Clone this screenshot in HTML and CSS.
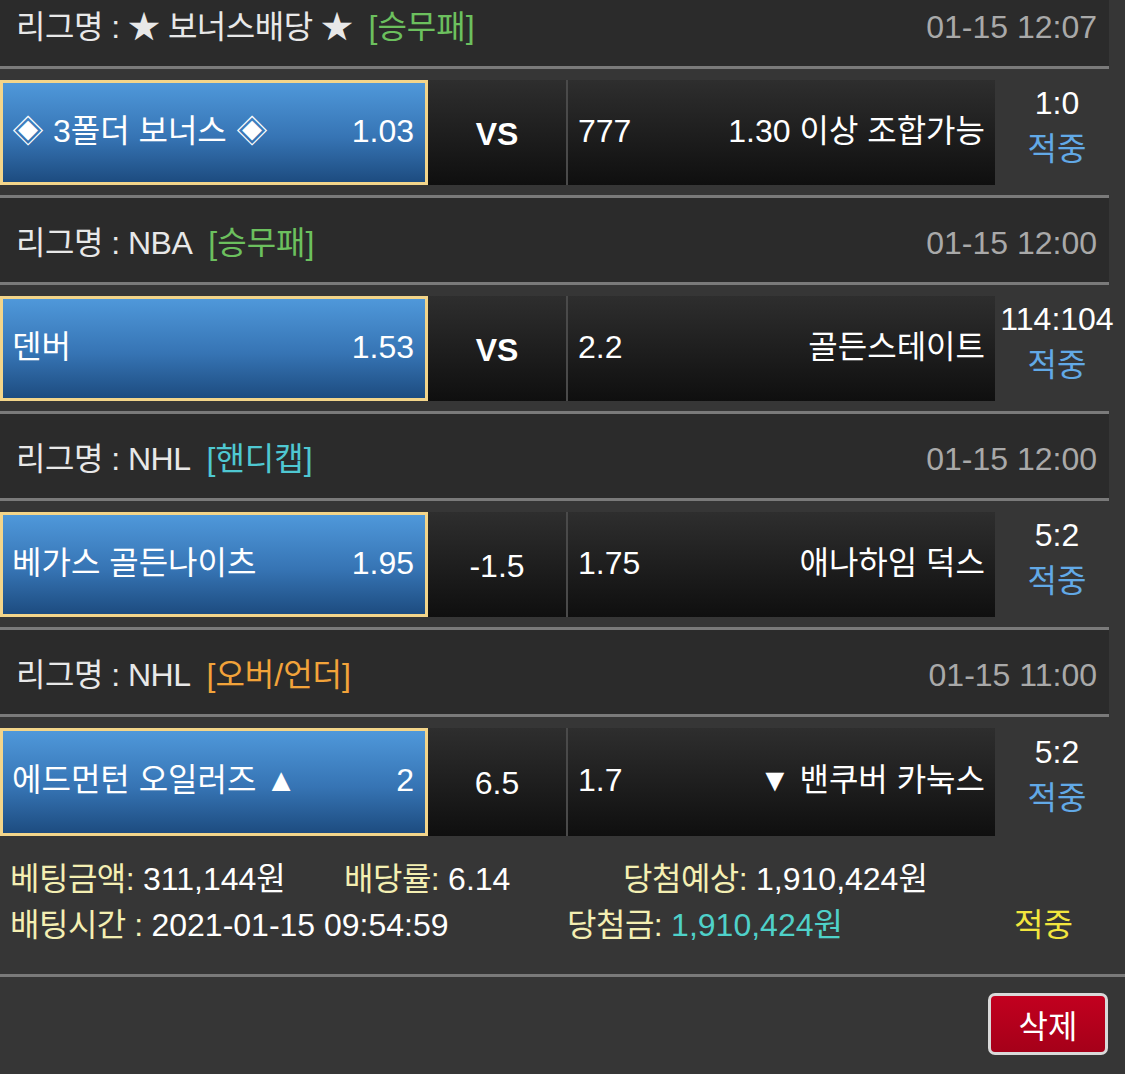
FILE: index.html
```html
<!DOCTYPE html>
<html lang="ko">
<head>
    <meta charset="UTF-8">
    <meta name="viewport" content="width=device-width, initial-scale=1.0">
    <title>베팅내역</title>
    <link rel="stylesheet" href="styles.css">
</head>
<body>
    <div class="slip">
        <div class="game">
            <div class="league">
                <span class="name">리그명 : ★ 보너스배당 ★</span>
                <span class="type win">[승무패]</span>
                <span class="time">01-15 12:07</span>
            </div>
            <div class="match">
                <div class="home"><span>◈ 3폴더 보너스 ◈</span><span>1.03</span></div>
                <div class="mid vs">VS</div>
                <div class="away"><span>777</span><span>1.30 이상 조합가능</span></div>
                <div class="result"><div>1:0</div><div class="hit">적중</div></div>
            </div>
        </div>
        <div class="game">
            <div class="league">
                <span class="name">리그명 : NBA</span>
                <span class="type win">[승무패]</span>
                <span class="time">01-15 12:00</span>
            </div>
            <div class="match">
                <div class="home"><span>덴버</span><span>1.53</span></div>
                <div class="mid vs">VS</div>
                <div class="away"><span>2.2</span><span>골든스테이트</span></div>
                <div class="result"><div>114:104</div><div class="hit">적중</div></div>
            </div>
        </div>
        <div class="game">
            <div class="league">
                <span class="name">리그명 : NHL</span>
                <span class="type handi">[핸디캡]</span>
                <span class="time">01-15 12:00</span>
            </div>
            <div class="match">
                <div class="home"><span>베가스 골든나이츠</span><span>1.95</span></div>
                <div class="mid">-1.5</div>
                <div class="away"><span>1.75</span><span>애나하임 덕스</span></div>
                <div class="result"><div>5:2</div><div class="hit">적중</div></div>
            </div>
        </div>
        <div class="game">
            <div class="league">
                <span class="name">리그명 : NHL</span>
                <span class="type over">[오버/언더]</span>
                <span class="time">01-15 11:00</span>
            </div>
            <div class="match">
                <div class="home"><span>에드먼턴 오일러즈 ▲</span><span>2</span></div>
                <div class="mid">6.5</div>
                <div class="away"><span>1.7</span><span>▼ 밴쿠버 카눅스</span></div>
                <div class="result"><div>5:2</div><div class="hit">적중</div></div>
            </div>
        </div>
    </div>

    <div class="summary">
        <div class="row first">
            <div><span class="label">베팅금액:</span> 311,144원</div>
            <div><span class="label">배당률:</span> 6.14</div>
            <div><span class="label">당첨예상:</span> 1,910,424원</div>
        </div>
        <div class="row second">
            <div><span class="label">배팅시간 :</span> 2021-01-15 09:54:59</div>
            <div><span class="label">당첨금:</span> <span class="won">1,910,424원</span></div>
            <div class="status">적중</div>
        </div>
    </div>

    <div class="actions">
        <button class="delete">삭제</button>
    </div>
</body>
</html>
```

FILE: styles.css
```css
body {
    margin: 0;
    background: #363636;
    color: #fff;
    font-family: "Liberation Sans", "Noto Sans CJK KR", sans-serif;
    font-size: 32px;
    line-height: 40px;
    overflow: hidden;
}

.slip {
    width: 1109px;
    margin-top: -18px;
}

.league {
    height: 87px;
    box-sizing: border-box;
    padding: 5px 12px 0 16px;
    display: flex;
    align-items: center;
    background: #2b2b2b;
    border-bottom: 3px solid #7a7a7a;
    color: #e8e8e8;
}

.league .name {
    letter-spacing: -0.5px;
}

.league .type {
    margin-left: 16px;
}

.type.win { color: #6cc05e; }
.type.handi { color: #4fc8d2; }
.type.over { color: #f2a33a; }

.league .time {
    margin-left: auto;
    color: #a9a9a9;
}

.match {
    height: 129px;
    box-sizing: border-box;
    padding: 11px 0 10px;
    display: flex;
    border-bottom: 3px solid #7a7a7a;
}

.game:last-child .match {
    border-bottom: none;
}

.home, .away {
    display: flex;
    flex-shrink: 0;
    justify-content: space-between;
    align-items: center;
    box-sizing: border-box;
}

.home {
    width: 428px;
    padding: 0 11px 4px 9px;
    border: 3px solid #f3d58a;
    background: linear-gradient(#4f98da, #3674b4 55%, #1d4c80);
}

.mid {
    width: 138px;
    flex-shrink: 0;
    display: flex;
    justify-content: center;
    align-items: center;
    padding-top: 2px;
    box-sizing: border-box;
    background: linear-gradient(#2e2e2e, #0f0f0f);
}

.mid.vs {
    font-weight: bold;
}

.away {
    width: 429px;
    padding: 0 10px 4px 10px;
    border-left: 2px solid #4a4a4a;
    background: linear-gradient(#2e2e2e, #0f0f0f);
}

.result {
    flex: 1;
    min-width: 0;
    padding: 0 0 14px 10px;
    display: flex;
    flex-direction: column;
    justify-content: center;
    align-items: center;
    line-height: 46px;
    white-space: nowrap;
}

.result .hit {
    color: #62a9e6;
}

.summary {
    padding: 10px 0 26px;
    border-bottom: 3px solid #7a7a7a;
}

.summary .row {
    display: grid;
    padding-left: 10px;
    line-height: 46px;
}

.summary .first {
    grid-template-columns: 334px 279px 1fr;
}

.summary .second {
    grid-template-columns: 557px 447px 1fr;
}

.summary .label {
    color: #f4efb2;
    letter-spacing: -0.5px;
}

.summary .won {
    color: #4fd1c9;
}

.summary .status {
    color: #f3e63e;
}

.actions {
    display: flex;
    justify-content: flex-end;
    padding: 16px 17px 0 0;
}

.delete {
    width: 120px;
    height: 62px;
    border: 3px solid #d9d9d9;
    border-radius: 7px;
    background: linear-gradient(#c2001f, #a50019);
    color: #fff;
    font-family: inherit;
    font-size: 32px;
}
```
